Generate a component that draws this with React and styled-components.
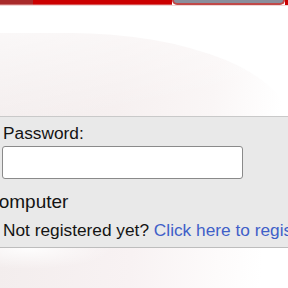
import React from "react";
import styled, { createGlobalStyle } from "styled-components";

const GlobalStyle = createGlobalStyle`
  html, body {
    margin: 0;
    padding: 0;
    background: #ffffff;
    font-family: "Liberation Sans", Arial, sans-serif;
    overflow: hidden;
  }
`;

const App = () => {
  return (
    <>
      <GlobalStyle />
      <Page>
        <TopBar>
          <BarStart />
          <BarMiddle />
          <BarTab />
          <BarEnd />
        </TopBar>
        <Stage>
          <Panel>
            <Label>Password:</Label>
            <Input type="password" />
            <Remember>Remember me on this computer</Remember>
            <Register>
              Not registered yet? <RegisterLink href="#">Click here to register</RegisterLink>
            </Register>
          </Panel>
          <Under />
        </Stage>
      </Page>
    </>
  );
};

export default App;

const Page = styled.div`
  width: 288px;
  height: 288px;
  overflow: hidden;
  background: #ffffff;
`;

const TopBar = styled.div`
  display: flex;
  height: 5px;
  border-bottom: 1px solid #f1d6d6;
`;

const BarStart = styled.div`
  width: 33px;
  background: #a82a2a;
  border-bottom: 1px solid #c86a6a;
`;

const BarMiddle = styled.div`
  flex: 1;
  background: #cc0000;
  border-bottom: 1px solid #d85050;
`;

const BarTab = styled.div`
  width: 113px;
  background: #8a8e9c;
  border: 2px solid #c04848;
  border-top: none;
  border-radius: 0 0 5px 5px;
  box-sizing: border-box;
`;

const BarEnd = styled.div`
  width: 3px;
  background: #cc0000;
`;

const Stage = styled.div`
  margin-top: 27px;
  padding-top: 83px;
  border-radius: 0 220px 0 0 / 0 90px 0 0;
  background: linear-gradient(
    170deg,
    rgba(255, 255, 255, 0.6) 0%,
    rgba(255, 255, 255, 0) 30%
  ),
  linear-gradient(
    95deg,
    #f3eded 0%,
    #f6f0f0 40%,
    #faf6f6 70%,
    #ffffff 92%
  );
`;

const Panel = styled.div`
  background: #e9e9e9;
  border-top: 1px solid #c9c9c9;
  border-bottom: 1px solid #bdbdbd;
  padding: 7px 0 7px 3px;
  color: #141414;
  font-size: 17.3px;
  line-height: 19px;
`;

const Label = styled.div`
  margin-left: 0;
`;

const Input = styled.input`
  display: block;
  box-sizing: border-box;
  width: 241px;
  height: 33px;
  margin: 3px 0 0 -1px;
  background: #ffffff;
  border: 1px solid #8a8a8a;
  border-radius: 3px;
  padding: 0 4px;
  font-size: 16px;
`;

const Remember = styled.div`
  margin: 12px 0 0 -206px;
  font-size: 19px;
  line-height: 21px;
  white-space: nowrap;
`;

const Register = styled.div`
  margin-top: 9px;
  white-space: nowrap;
`;

const RegisterLink = styled.a`
  color: #3f5fc8;
  text-decoration: none;
`;

const Under = styled.div`
  height: 60px;
  background:
    radial-gradient(ellipse 120px 30px at 10% 0%, rgba(255, 255, 255, 0.9), rgba(255, 255, 255, 0) 70%),
    linear-gradient(95deg, #f3eded 0%, #f8f2f3 45%, #fdfbfb 75%, #ffffff 90%);
`;
